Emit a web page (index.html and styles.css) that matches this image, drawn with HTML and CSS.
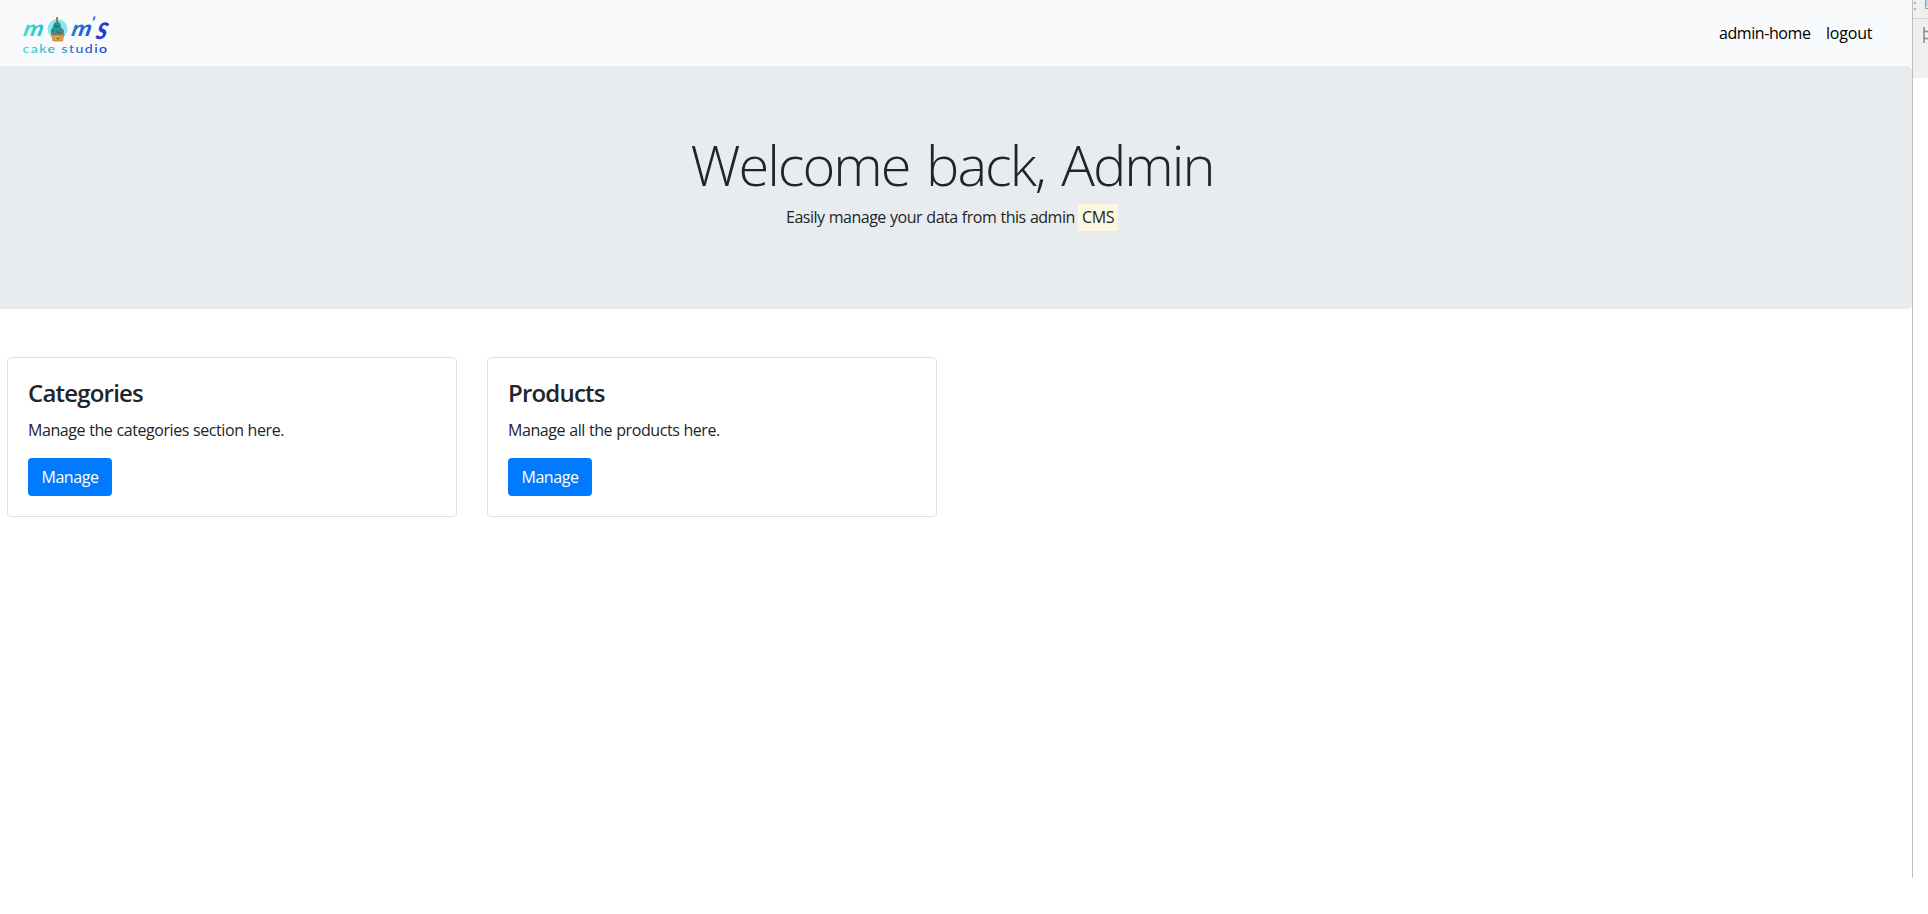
FILE: index.html
```html
<!DOCTYPE html>
<html lang="en">
<head>
<meta charset="utf-8">
<title>Mom's Cake Studio - Admin</title>
<link rel="stylesheet" href="styles.css">
</head>
<body>
<div class="screen">
  <div class="page">
    <nav class="navbar">
      <svg class="logo" width="110" height="56" viewBox="0 0 110 56">
        <defs>
          <linearGradient id="brand" gradientUnits="userSpaceOnUse" x1="7" y1="0" x2="94" y2="0">
            <stop offset="0" stop-color="#35e3cd"/>
            <stop offset=".55" stop-color="#267fd2"/>
            <stop offset="1" stop-color="#2626d8"/>
          </linearGradient>
        </defs>
        <g transform="translate(0 -2)">
          <circle cx="41.500" cy="25" r="10" fill="#8be8ea"/>
          <path d="M40 13h2v6h-2z" fill="#a9795d"/>
          <path d="M41.500 17c3 2 3.500 4 3.500 7 3 1 4 4 2 7H36c-2-3-1-6 1-8 0-3 2-5 4.500-6z" fill="#24959b"/>
          <path d="M38 22l6 1M36 27l10 2" stroke="#176d78"/>
          <circle cx="39" cy="28" r="1.300" fill="#c95b48"/>
          <circle cx="44" cy="23" r="1.200" fill="#c95b48"/>
          <circle cx="46" cy="28" r="1.300" fill="#c95b48"/>
          <path d="M35.500 30l2.500 1.500 3-1 3 1 4-1.500-1.500 7H37z" fill="#e6a13f" stroke="#996b36" stroke-width=".6"/>
          <path d="M40.500 34q1.700 2 3.500 0" fill="none" stroke="#5d4330" stroke-width=".8"/>
        </g>
        <g transform="translate(0 30) skewX(-12)">
          <text class="script" x="6.500" y="0" textLength="20" lengthAdjust="spacingAndGlyphs">m</text>
          <text class="script" x="54.500" y="0" textLength="20" lengthAdjust="spacingAndGlyphs">m</text>
          <text class="script apostrophe" x="72" y="-8">'</text>
          <text class="script letter-s" x="80" y="3" textLength="11" lengthAdjust="spacingAndGlyphs">s</text>
        </g>
        <text class="studio" x="6.500" y="46.500" textLength="86" lengthAdjust="spacingAndGlyphs">cake studio</text>
      </svg>
      <div class="links">
        <a class="link home">admin-home</a>
        <a class="link logout">logout</a>
      </div>
    </nav>
    <header class="jumbotron">
      <h1 class="welcome">Welcome back, Admin</h1>
      <p class="lead"><span class="lead-text">Easily manage your data from this admin</span><mark class="mark">CMS</mark></p>
    </header>
    <main class="cards">
      <section class="card">
        <h5 class="title">Categories</h5>
        <p class="text">Manage the categories section here.</p>
        <a class="button">Manage</a>
      </section>
      <section class="card">
        <h5 class="title">Products</h5>
        <p class="text">Manage all the products here.</p>
        <a class="button">Manage</a>
      </section>
    </main>
  </div>
  <aside class="edge">
    <svg width="15" height="78" viewBox="0 0 15 78">
      <path d="M0 0h15v78H0z" fill="#efefef"/>
      <path d="M0 18.500h15" stroke="#d5d5d5"/>
      <path d="M1 2h2v2H1zM1 8h2v2H1z" fill="#b9b2a8"/>
      <path d="M13 0h2v7h-2z" fill="#b8dced"/>
      <path d="M12.500 0v8.500H15" fill="none" stroke="#b39b68"/>
      <path d="M11 27v16M11 31.500h4M11 38.500h4" fill="none" stroke="#858995" stroke-width="1.500"/>
    </svg>
  </aside>
</div>
</body>
</html>
```
FILE: styles.css
```css
* { box-sizing: border-box; }
body {
  margin: 0;
  background: #fff;
  color: #212529;
  font: 16px/24px "Open Sans", "Noto Sans", sans-serif;
  letter-spacing: -.42px;
}
h1, h5, p { margin: 0; }
.screen { display: flex; width: 1928px; height: 914px; overflow: hidden; }
.page { width: 1913px; height: 878px; border-right: 1px solid #bdbdbd; }
.edge { width: 15px; }
.edge svg { display: block; }
.navbar {
  display: flex;
  justify-content: space-between;
  align-items: center;
  height: 66px;
  padding: 0 39px 0 16px;
  background: #f8fafc;
}
.logo { display: block; margin-top: 2px; letter-spacing: 0; }
.script { fill: url(#brand); font: italic 700 22px "Lato", sans-serif; }
.apostrophe { font-size: 16px; }
.letter-s { font-size: 32px; }
.studio { fill: url(#brand); font: 500 12px "Lato", sans-serif; letter-spacing: 1.2px; }
.links { display: flex; gap: 16px; color: #000; }
.link { white-space: nowrap; }
.home { width: 91px; }
.logout { width: 47px; letter-spacing: -.2px; }
.jumbotron {
  display: flex;
  flex-direction: column;
  align-items: center;
  height: 243px;
  padding-top: 65px;
  padding-right: 8px;
  border-radius: 0 5px 5px 0;
  background: #e8ecef;
}
.welcome {
  margin-bottom: 7px;
  font-size: 56px;
  font-weight: 300;
  line-height: 67px;
  letter-spacing: -2px;
  word-spacing: 4px;
  white-space: nowrap;
}
.lead { display: flex; align-items: center; gap: 4px; height: 24px; white-space: nowrap; }
.lead-text { width: 288px; letter-spacing: -.5px; word-spacing: .6px; }
.mark { width: 40px; height: 27px; padding: 1px 4px; background: #fdf6e0; color: #212529; }
.cards { display: flex; gap: 30px; padding: 48px 7px; }
.card { width: 450px; height: 160px; padding: 20px; border: 1px solid #dfdfdf; border-radius: 4px; }
.title {
  height: 29px;
  margin-bottom: 11px;
  font-size: 24px;
  font-weight: 600;
  line-height: 29px;
  letter-spacing: -.8px;
}
.text { margin-bottom: 16px; word-spacing: .3px; white-space: nowrap; }
.button {
  display: flex;
  align-items: center;
  justify-content: center;
  width: 84px;
  height: 38px;
  border-radius: 4px;
  background: #007bff;
  color: #fff;
}
```
